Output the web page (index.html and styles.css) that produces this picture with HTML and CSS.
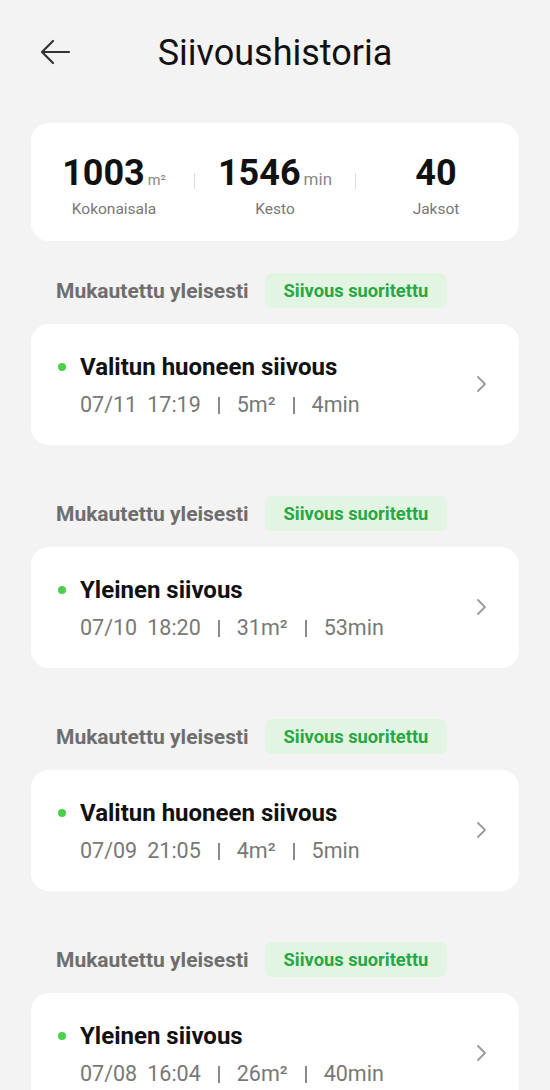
FILE: index.html
```html
<!DOCTYPE html>
<html lang="fi">
<head>
<meta charset="utf-8">
<title>Siivoushistoria</title>
<link rel="stylesheet" href="styles.css">
</head>
<body>
<div class="page">
  <header class="topbar">
    <button class="back" aria-label="Takaisin">
      <svg width="32" height="26" viewBox="0 0 32 26"><path d="M30 13H3M14 2L3 13l11 11" fill="none" stroke="#333" stroke-width="2.2" stroke-linecap="round" stroke-linejoin="round"/></svg>
    </button>
    <h1 class="title">Siivoushistoria</h1>
  </header>

  <section class="summary">
    <div class="stat">
      <div class="value">1003<span class="unit small">m²</span></div>
      <div class="label">Kokonaisala</div>
    </div>
    <div class="sep"></div>
    <div class="stat">
      <div class="value">1546<span class="unit">min</span></div>
      <div class="label">Kesto</div>
    </div>
    <div class="sep"></div>
    <div class="stat">
      <div class="value">40</div>
      <div class="label">Jaksot</div>
    </div>
  </section>

  <section class="group">
    <div class="group-head"><span class="mode">Mukautettu yleisesti</span><span class="badge">Siivous suoritettu</span></div>
    <div class="item">
      <div class="item-body">
        <div class="item-title"><span class="dot"></span>Valitun huoneen siivous</div>
        <div class="meta"><span>07/11</span><span class="time">17:19</span><span class="bar"></span><span>5m²</span><span class="bar"></span><span>4min</span></div>
      </div>
      <svg class="chev" width="12" height="18" viewBox="0 0 12 18"><path d="M2 2l7 7-7 7" fill="none" stroke="#9a9a9a" stroke-width="1.8" stroke-linecap="round" stroke-linejoin="round"/></svg>
    </div>
  </section>

  <section class="group">
    <div class="group-head"><span class="mode">Mukautettu yleisesti</span><span class="badge">Siivous suoritettu</span></div>
    <div class="item">
      <div class="item-body">
        <div class="item-title"><span class="dot"></span>Yleinen siivous</div>
        <div class="meta"><span>07/10</span><span class="time">18:20</span><span class="bar"></span><span>31m²</span><span class="bar"></span><span>53min</span></div>
      </div>
      <svg class="chev" width="12" height="18" viewBox="0 0 12 18"><path d="M2 2l7 7-7 7" fill="none" stroke="#9a9a9a" stroke-width="1.8" stroke-linecap="round" stroke-linejoin="round"/></svg>
    </div>
  </section>

  <section class="group">
    <div class="group-head"><span class="mode">Mukautettu yleisesti</span><span class="badge">Siivous suoritettu</span></div>
    <div class="item">
      <div class="item-body">
        <div class="item-title"><span class="dot"></span>Valitun huoneen siivous</div>
        <div class="meta"><span>07/09</span><span class="time">21:05</span><span class="bar"></span><span>4m²</span><span class="bar"></span><span>5min</span></div>
      </div>
      <svg class="chev" width="12" height="18" viewBox="0 0 12 18"><path d="M2 2l7 7-7 7" fill="none" stroke="#9a9a9a" stroke-width="1.8" stroke-linecap="round" stroke-linejoin="round"/></svg>
    </div>
  </section>

  <section class="group">
    <div class="group-head"><span class="mode">Mukautettu yleisesti</span><span class="badge">Siivous suoritettu</span></div>
    <div class="item">
      <div class="item-body">
        <div class="item-title"><span class="dot"></span>Yleinen siivous</div>
        <div class="meta"><span>07/08</span><span class="time">16:04</span><span class="bar"></span><span>26m²</span><span class="bar"></span><span>40min</span></div>
      </div>
      <svg class="chev" width="12" height="18" viewBox="0 0 12 18"><path d="M2 2l7 7-7 7" fill="none" stroke="#9a9a9a" stroke-width="1.8" stroke-linecap="round" stroke-linejoin="round"/></svg>
    </div>
  </section>
</div>
</body>
</html>
```

FILE: styles.css
```css
* { box-sizing: border-box; }
html, body {
  margin: 0;
  padding: 0;
  background: #f3f3f3;
  font-family: Roboto, "Noto Sans", "Liberation Sans", sans-serif;
  color: #111;
}
.page {
  width: 550px;
  height: 1090px;
  overflow: hidden;
  padding: 0 31px;
}
.topbar {
  position: relative;
  height: 105px;
  display: flex;
  align-items: center;
  justify-content: center;
}
.back {
  position: absolute;
  left: 8px;
  top: 39px;
  border: 0;
  background: none;
  padding: 0;
  line-height: 0;
}
.title {
  margin: 0;
  font-size: 36px;
  font-weight: 400;
  color: #111;
}
.summary {
  margin-top: 18px;
  height: 118px;
  background: #fff;
  border-radius: 18px;
  display: flex;
  align-items: flex-start;
  justify-content: center;
  padding-top: 28px;
}
.stat {
  width: 160px;
  display: flex;
  flex-direction: column;
  align-items: center;
}
.value {
  font-size: 36px;
  font-weight: 700;
  color: #111;
  line-height: 44px;
  height: 44px;
  white-space: nowrap;
}
.unit {
  font-size: 17px;
  font-weight: 400;
  color: #888;
  margin-left: 3px;
}
.unit.small { font-size: 14.5px; }
.label {
  font-size: 15.5px;
  color: #777;
  margin-top: 5px;
}
.sep {
  width: 1px;
  height: 16px;
  background: #ddd;
  margin-top: 22px;
}
.group { margin-top: 32px; }
.group + .group { margin-top: 51px; }
.group-head {
  display: flex;
  align-items: center;
  padding-left: 25px;
  gap: 16px;
  height: 35px;
}
.mode {
  font-size: 21px;
  font-weight: 700;
  color: #6e6e6e;
}
.badge {
  background: #e2f5e2;
  color: #27a844;
  font-size: 18.3px;
  font-weight: 700;
  padding: 0 19px;
  height: 35px;
  line-height: 35px;
  border-radius: 7px;
}
.item {
  margin-top: 16px;
  height: 121px;
  background: #fff;
  border-radius: 18px;
  display: flex;
  align-items: flex-start;
  padding: 28px 31px 0 27px;
}
.item-body { flex: 1; }
.item-title {
  display: flex;
  align-items: center;
  font-size: 24px;
  font-weight: 700;
  color: #111;
  line-height: 30px;
}
.dot {
  width: 8px;
  height: 8px;
  border-radius: 50%;
  background: #4cd04c;
  margin-right: 14px;
}
.meta {
  margin-top: 9px;
  padding-left: 22px;
  font-size: 21.5px;
  line-height: 28px;
  color: #787878;
  display: flex;
  align-items: center;
}
.time { margin-left: 10px; }
.bar {
  flex: none;
  width: 2px;
  height: 17px;
  background: #8a8a8a;
  margin: 0 17px;
}
.chev {
  flex: none;
  margin-top: 23px;
}
```
